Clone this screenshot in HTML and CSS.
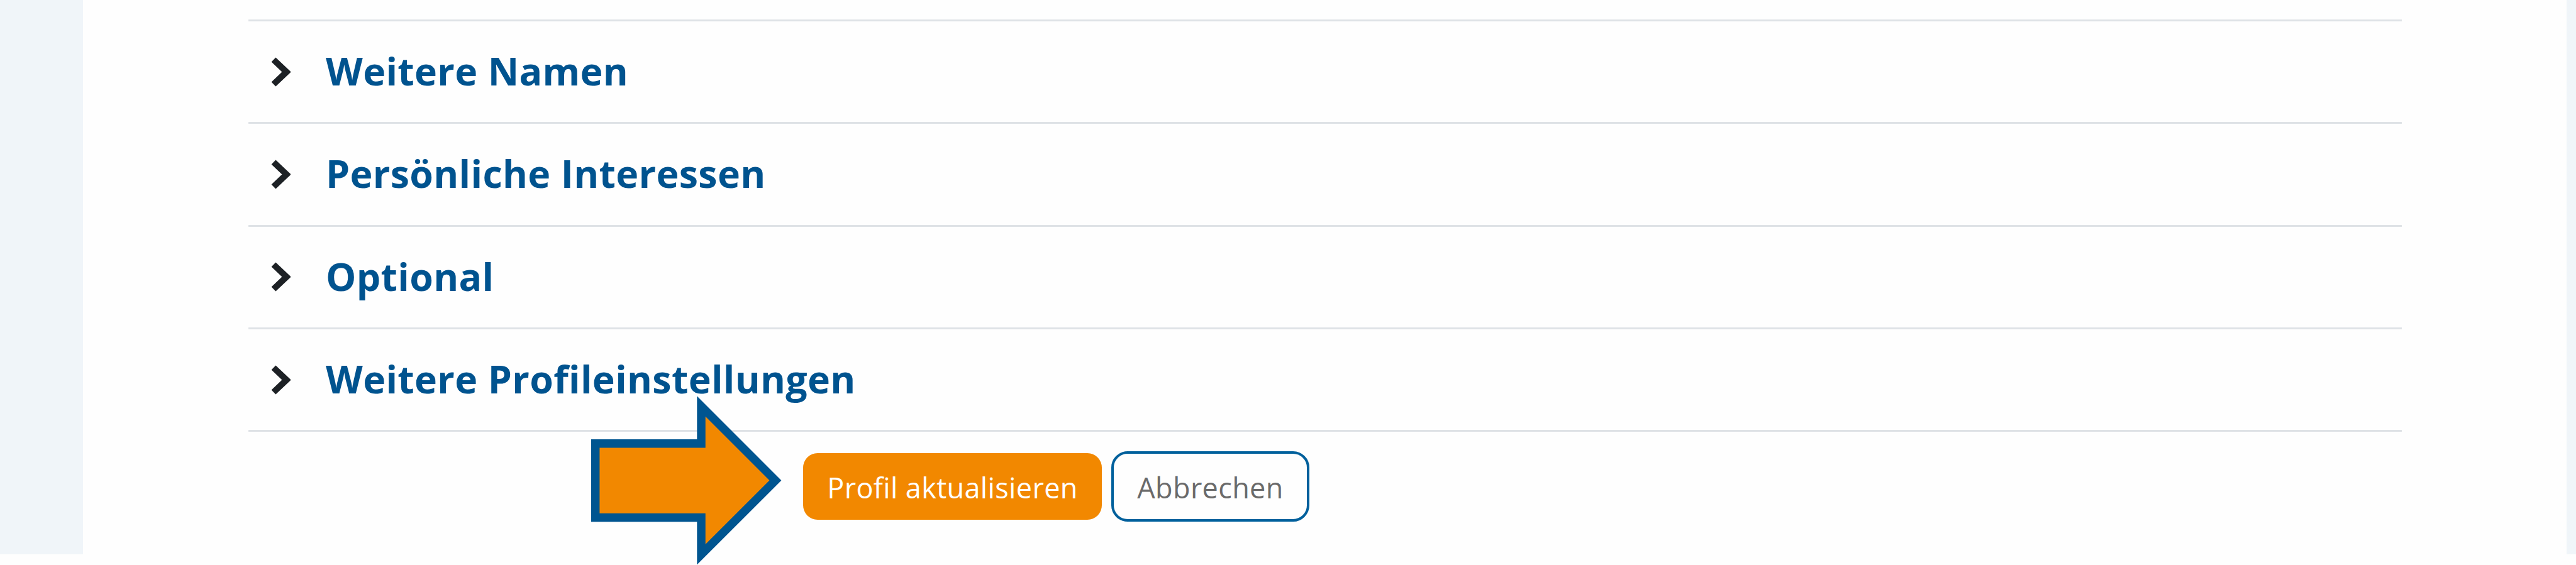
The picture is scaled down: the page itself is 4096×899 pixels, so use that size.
FILE: index.html
```html
<!DOCTYPE html>
<html lang="de">
<head>
    <meta charset="UTF-8">
    <meta name="viewport" content="width=device-width, initial-scale=1.0">
    <title>Profil bearbeiten</title>
    <link rel="stylesheet" href="styles.css">
</head>
<body>
    <div class="page">
        <main class="content">
            <section class="fieldset">
                <svg class="chevron" viewBox="0 0 31 47"><path d="M4 4 L24.5 23.5 L4 43"/></svg>
                <h3>Weitere Namen</h3>
            </section>
            <section class="fieldset">
                <svg class="chevron" viewBox="0 0 31 47"><path d="M4 4 L24.5 23.5 L4 43"/></svg>
                <h3>Persönliche Interessen</h3>
            </section>
            <section class="fieldset">
                <svg class="chevron" viewBox="0 0 31 47"><path d="M4 4 L24.5 23.5 L4 43"/></svg>
                <h3>Optional</h3>
            </section>
            <section class="fieldset">
                <svg class="chevron" viewBox="0 0 31 47"><path d="M4 4 L24.5 23.5 L4 43"/></svg>
                <h3>Weitere Profileinstellungen</h3>
            </section>
            <div class="buttons">
                <button class="btn btn-primary">Profil aktualisieren</button>
                <button class="btn btn-secondary">Abbrechen</button>
            </div>
        </main>
    </div>

    <!-- Hinweispfeil auf den Speichern-Button -->
    <svg class="arrow" viewBox="0 0 316 281">
        <path d="M7 79 H182.7 V17.2 L305.8 140.3 L182.7 263.4 V202 H7 Z"/>
    </svg>
</body>
</html>
```

FILE: styles.css
```css
* {
    box-sizing: border-box;
}

body {
    margin: 0;
    height: 899px;
    overflow: hidden;
    background-color: #fefefe;
    font-family: "Open Sans", sans-serif;
}

.page {
    height: 882px;
    padding: 0 15px 0 132px;
    background-color: #f0f5f9;
}

.content {
    height: 100%;
    padding: 31px 262px 0 263px;
    background-color: #fefefe;
}

.fieldset {
    display: flex;
    align-items: center;
    height: 163.3px;
    padding: 0 0 2px 36px;
    border-top: 3px solid #dee2e6;
}

.fieldset h3 {
    margin: 0 0 0 56px;
    font-size: 60.8px;
    font-weight: 700;
    line-height: 72px;
    letter-spacing: 0.35px;
    color: #00538f;
    white-space: nowrap;
}

.chevron {
    width: 31px;
    height: 47px;
    margin-top: 2px;
}

.chevron path {
    fill: none;
    stroke: #1d2125;
    stroke-width: 10;
}

.buttons {
    display: flex;
    align-items: center;
    gap: 15px;
    padding: 31px 0 0 882px;
    border-top: 3px solid #dee2e6;
}

.btn {
    padding: 2px 0 0;
    border: none;
    font-family: inherit;
    font-size: 45px;
    letter-spacing: 0.35px;
    white-space: nowrap;
}

.btn-primary {
    width: 475px;
    height: 106px;
    border-radius: 23px;
    background-color: #f28800;
    color: #fff;
}

.btn-secondary {
    width: 315px;
    height: 112px;
    border: 4px solid #00609c;
    border-radius: 26px;
    background-color: #fefefe;
    color: #6a6a6a;
}

/* liegt über der Trennlinie */
.arrow {
    position: absolute;
    left: 940px;
    top: 629.5px;
    width: 302.7px;
    height: 269.2px;
}

.arrow path {
    fill: #f28800;
    stroke: #005590;
    stroke-width: 14;
}
```
